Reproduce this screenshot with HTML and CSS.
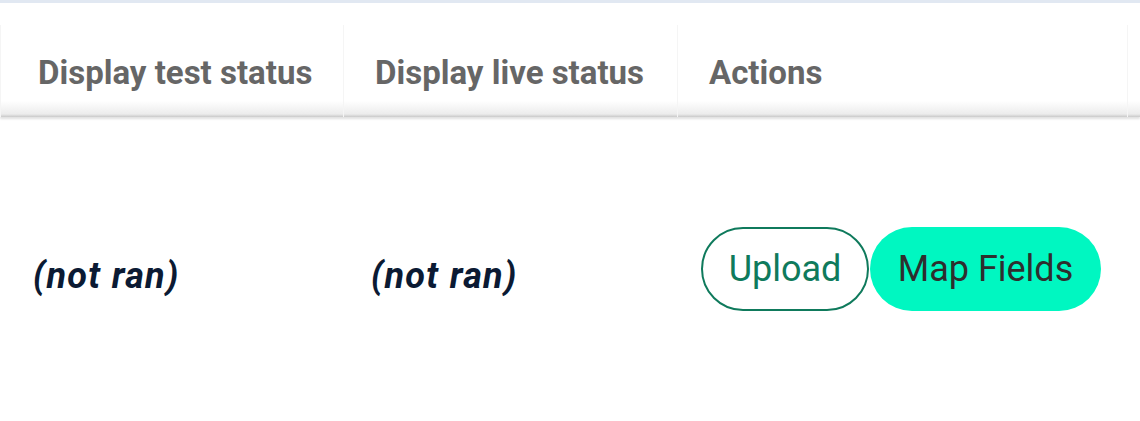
FILE: index.html
```html
<!DOCTYPE html>
<html>
<head>
<meta charset="utf-8">
<link rel="stylesheet" href="styles.css">
</head>
<body>
<div class="page">
  <div class="table">
    <div class="head">
      <div class="th">Display test status</div>
      <div class="th">Display live status</div>
      <div class="th">Actions</div>
      <div class="th th-end"></div>
    </div>
    <div class="row">
      <div class="td status">(not ran)</div>
      <div class="td status">(not ran)</div>
      <div class="td actions">
        <button class="btn btn-outline">Upload</button>
        <button class="btn btn-fill">Map Fields</button>
      </div>
      <div class="td"></div>
    </div>
  </div>
</div>
</body>
</html>
```
FILE: styles.css
```css
html, body {
  margin: 0;
  padding: 0;
  background: #fff;
  font-family: Roboto, "Noto Sans", sans-serif;
}
.page {
  border-top: 3px solid #e1e8f2;
  width: 1140px;
  height: 418px;
  overflow: hidden;
}
.table {
  padding-top: 22px;
}
.head {
  display: grid;
  grid-template-columns: 343px 334px 450px 13px;
  height: 92px;
  background: linear-gradient(to bottom, #fff 0, #fff 76px, #ececec 89px, #c9c9c9 92px);
  box-shadow: 0 2px 2px rgba(0,0,0,0.12);
}
.th {
  display: flex;
  align-items: center;
  padding-left: 37px;
  padding-top: 2px;
  font-size: 33px;
  font-weight: 700;
  color: #666;
  border-left: 1px solid #f5f5f5;
  box-sizing: border-box;
}
.th:nth-child(2), .th:nth-child(3) {
  padding-left: 31px;
}
.th-end {
  padding: 0;
}
.row {
  display: grid;
  grid-template-columns: 343px 334px 450px 13px;
  height: 300px;
  padding-top: 110px;
  box-sizing: border-box;
  align-items: start;
}
.td.status {
  padding-left: 33px;
  padding-top: 28px;
  font-size: 36px;
  letter-spacing: 1.3px;
  font-weight: 700;
  font-style: italic;
  color: #0b1a33;
}
.td.status:nth-child(2) {
  padding-left: 28px;
}
.actions {
  display: flex;
  gap: 1px;
  padding-left: 24px;
}
.btn {
  font-family: Roboto, "Noto Sans", sans-serif;
  font-size: 36px;
  height: 84px;
  border-radius: 42px;
  box-sizing: border-box;
  cursor: pointer;
  padding: 0;
  text-align: center;
}
.btn-outline {
  background: #fff;
  border: 2px solid #0f7a5c;
  color: #0f7a5c;
  width: 168px;
}
.btn-fill {
  background: #00f7c1;
  border: none;
  color: #2e2e2e;
  width: 231px;
}
```
